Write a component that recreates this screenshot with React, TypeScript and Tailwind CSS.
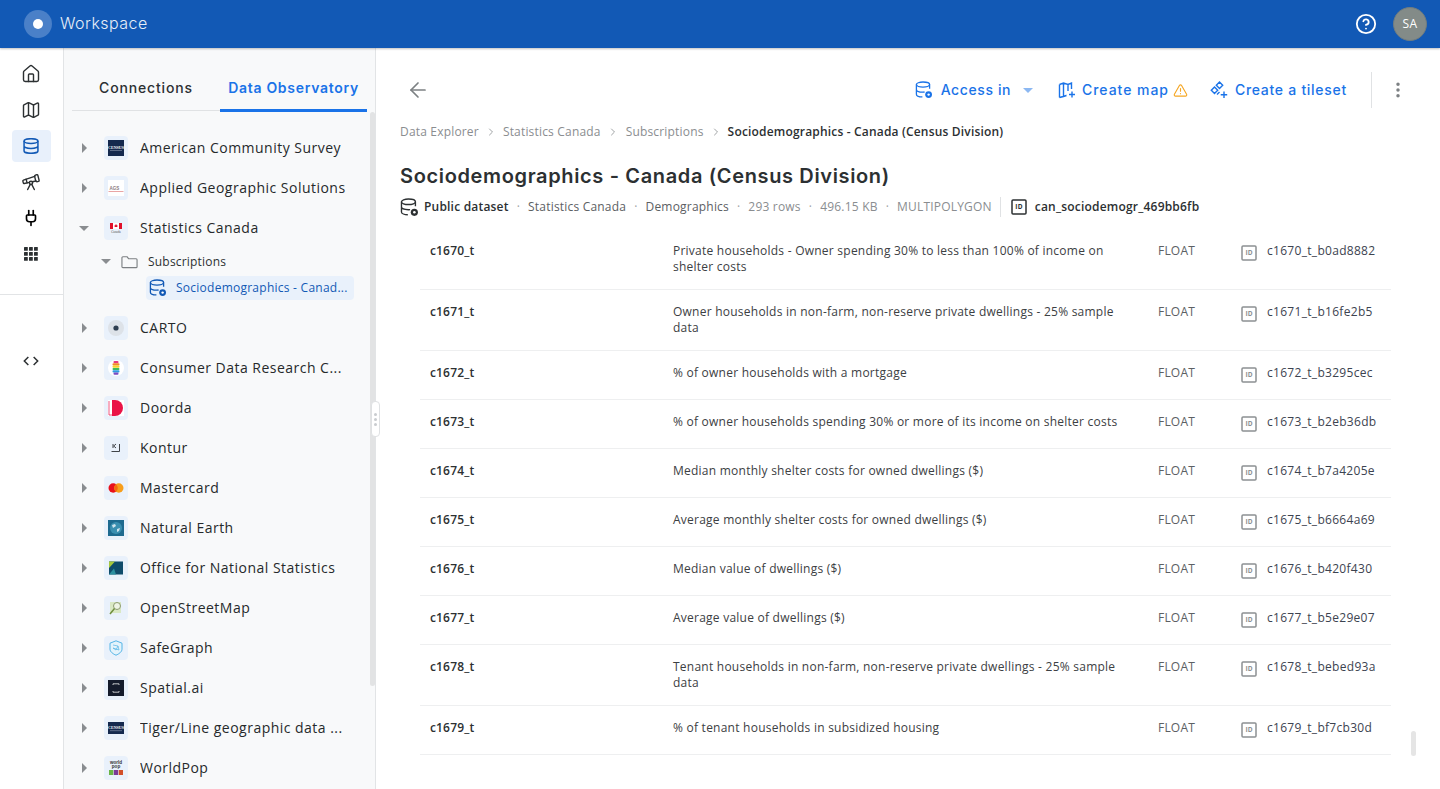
import React from "react";
import { House, Map as MapIcon, Telescope, Plug, CircleHelp, ArrowLeft, EllipsisVertical, TriangleAlert, ChevronRight } from "lucide-react";

const OPEN = "font-['Open_Sans',sans-serif]";
const HEAD = "font-['Inter',sans-serif]";

function DbBadge({ className = "" }: { className?: string }) {
  return (
    <svg viewBox="0 0 18 18" fill="none" stroke="currentColor" strokeWidth="1.3" className={className}>
      <ellipse cx="8" cy="3.6" rx="6.6" ry="2.6" />
      <path d="M1.4 3.6v9.6c0 1.5 2.8 2.7 6 2.7M14.6 3.6v4.2M1.4 8.4c0 1.5 2.9 2.7 6.6 2.7 .6 0 1.100 0 1.600-.1" />
      <circle cx="13.6" cy="13.6" r="3.4" fill="currentColor" stroke="none" />
      <circle cx="13.6" cy="13.6" r="1.2" fill="#fff" stroke="none" />
    </svg>
  );
}

function IdIcon({ dark = false }: { dark?: boolean }) {
  return (
    <svg viewBox="0 0 16 16" className="w-4 h-4 shrink-0" fill="none">
      <rect x="1" y="1" width="14" height="14" rx="1" stroke={dark ? "#2c3032" : "#8c9092"} strokeWidth="1.500" />
      <text x="8" y="10.300" textAnchor="middle" fontSize="6.500" fontWeight="700" fontFamily="Open Sans" fill={dark ? "#2c3032" : "#8c9092"}>ID</text>
    </svg>
  );
}

function Caret({ open = false }: { open?: boolean }) {
  return open ? (
    <span className="block w-0 h-0 border-x-[5px] border-x-transparent border-t-[5px] border-t-[#8a8d90]" />
  ) : (
    <span className="block w-0 h-0 border-y-[5px] border-y-transparent border-l-[5px] border-l-[#8a8d90]" />
  );
}

const logoBox = "w-4 h-4";
const logos: Record<string, React.ReactNode> = {
  census: (
    <svg viewBox="0 0 16 16" className={logoBox}>
      <rect width="16" height="16" fill="#14294e" />
      <text x="8" y="8.500" textAnchor="middle" fontSize="4" fontWeight="700" fill="#fff" fontFamily="Liberation Serif">CENSUS</text>
      <rect x="2" y="10" width="12" height="0.600" fill="#8a98b0" />
    </svg>
  ),
  census2: (
    <svg viewBox="0 0 16 16" className={logoBox}>
      <rect y="2" width="16" height="12" fill="#14294e" />
      <text x="8" y="9" textAnchor="middle" fontSize="4" fontWeight="700" fill="#fff" fontFamily="Liberation Serif">CENSUS</text>
      <rect x="2" y="10.500" width="12" height="0.600" fill="#8a98b0" />
    </svg>
  ),
  ags: (
    <svg viewBox="0 0 16 16" className={logoBox}>
      <rect width="16" height="16" fill="#fff" />
      <text x="6.500" y="10" textAnchor="middle" fontSize="4.500" fontWeight="700" fill="#8a7a80" fontFamily="Liberation Sans">AGS</text>
      <rect x="0.500" y="11" width="15" height="0.500" fill="#d24a4a" />
    </svg>
  ),
  canada: (
    <svg viewBox="0 0 16 16" className={logoBox}>
      <rect x="2" y="3" width="12" height="6" fill="#fff" />
      <rect x="2" y="3" width="3" height="6" fill="#e0102a" />
      <rect x="11" y="3" width="3" height="6" fill="#e0102a" />
      <path d="M8 4l1 1.500.6-.3-.3 1.800H6.700l-.3-1.800.6.300z" fill="#e0102a" />
      <text x="8" y="13" textAnchor="middle" fontSize="3.200" fill="#555" fontFamily="Liberation Serif">Canada</text>
    </svg>
  ),
  carto: (
    <svg viewBox="0 0 16 16" className={logoBox}>
      <circle cx="8" cy="8" r="8" fill="#dde2e8" />
      <circle cx="8" cy="8" r="2.600" fill="#2f3f50" />
    </svg>
  ),
  cdrc: (
    <svg viewBox="0 0 16 16" className={logoBox}>
      <circle cx="8" cy="8" r="8" fill="#fff" />
      {["#e6397f", "#f28c28", "#f6d32d", "#3dbb5e", "#2f9de0", "#7a4bc2"].map((c, i) => (
        <rect key={c} x={i === 0 || i === 5 ? 5.500 : 4.500} y={1 + i * 2.300} width={i === 0 || i === 5 ? 5 : 7} height="2.200" rx="1" fill={c} />
      ))}
    </svg>
  ),
  doorda: (
    <svg viewBox="0 0 16 16" className={logoBox}>
      <rect width="16" height="16" fill="#fff" />
      <path d="M4 0h3a8 8 0 0 1 0 16H4z" fill="#ea1347" />
      <path d="M1 1v14h4" fill="none" stroke="#ea1347" strokeWidth="0.700" />
    </svg>
  ),
  kontur: (
    <svg viewBox="0 0 16 16" className={logoBox}>
      <path d="M5 4v4M8 4L5.700 6 8 8M3.500 11.500h8V4" fill="none" stroke="#2b2f33" strokeWidth="0.900" />
    </svg>
  ),
  mastercard: (
    <svg viewBox="0 0 16 16" className={logoBox}>
      <circle cx="5.200" cy="8" r="4.700" fill="#e8101c" />
      <circle cx="10.800" cy="8" r="4.700" fill="#f79e1b" />
      <path d="M8 4.300a4.700 4.700 0 0 1 0 7.400 4.700 4.700 0 0 1 0-7.400z" fill="#f26a10" />
    </svg>
  ),
  earth: (
    <svg viewBox="0 0 16 16" className={logoBox}>
      <rect width="16" height="16" fill="#1d6a8f" />
      <circle cx="8" cy="8" r="6" fill="#3a8fb0" />
      <path d="M4 5l3-1 1 2-3 2zM9 9l3-1-1 3-2 1z" fill="#cfe3ec" />
    </svg>
  ),
  ons: (
    <svg viewBox="0 0 16 16" className={logoBox}>
      <rect x="1" y="1.500" width="14" height="13" fill="#0f4c6b" />
      <path d="M1 14.500V8l6-6.500H1z" fill="#a7c83c" />
      <path d="M1 14.500l5-6 2 6z" fill="#2a8f9f" />
    </svg>
  ),
  osm: (
    <svg viewBox="0 0 16 16" className={logoBox}>
      <rect x="2" y="2" width="11" height="11" fill="#d9e8c4" />
      <circle cx="9" cy="6" r="3.500" fill="#eef4e4" stroke="#8c9a70" strokeWidth="1" />
      <path d="M6.500 8.500L2 14" stroke="#6f8f3f" strokeWidth="1.500" />
    </svg>
  ),
  safegraph: (
    <svg viewBox="0 0 16 16" className={logoBox}>
      <path d="M8 .8l6 2.400v6c0 2.500-3 4.800-6 6-3-1.200-6-3.500-6-6v-6z" fill="#e4f3fb" stroke="#53b4e6" strokeWidth="1" />
      <path d="M5 5l5 1-2 4-3-2 6 2M10 6l1 4" fill="none" stroke="#53b4e6" strokeWidth="0.700" />
    </svg>
  ),
  spatial: (
    <svg viewBox="0 0 16 16" className={logoBox}>
      <rect width="16" height="16" fill="#141b2b" />
      <path d="M5 5V3.800h6V5M5 11v1.200h6V11" fill="none" stroke="#e6e8ea" strokeWidth="0.800" />
    </svg>
  ),
  worldpop: (
    <svg viewBox="0 0 16 16" className={logoBox}>
      <text x="8" y="4" textAnchor="middle" fontSize="4.600" fontWeight="700" fill="#333" fontFamily="Liberation Sans">world</text>
      <text x="8" y="8.300" textAnchor="middle" fontSize="4.600" fontWeight="700" fill="#333" fontFamily="Liberation Sans">pop</text>
      <rect x="1" y="10" width="4.300" height="5" fill="#6ab445" />
      <rect x="5.800" y="10" width="4.300" height="5" fill="#7a3a96" />
      <rect x="10.700" y="10" width="4.300" height="5" fill="#d2502a" />
    </svg>
  ),
};

function TreeRow({ name, logo, open = false }: { name: string; logo: string; open?: boolean }) {
  return (
    <div className="flex items-center h-10">
      <div className="w-6 flex justify-center"><Caret open={open} /></div>
      <div className="w-6 h-6 ml-2 rounded bg-[#e9f1fb] flex items-center justify-center shrink-0">{logos[logo]}</div>
      <div className="ml-3 w-[212px] truncate text-sm font-medium tracking-[0.48px] text-[#26292b]">{name}</div>
    </div>
  );
}

const rows: [string, string, string, number][] = [
  ["c1670_t", "Private households - Owner spending 30% to less than 100% of income on shelter costs", "c1670_t_b0ad8882", 2],
  ["c1671_t", "Owner households in non-farm, non-reserve private dwellings - 25% sample data", "c1671_t_b16fe2b5", 2],
  ["c1672_t", "% of owner households with a mortgage", "c1672_t_b3295cec", 1],
  ["c1673_t", "% of owner households spending 30% or more of its income on shelter costs", "c1673_t_b2eb36db", 1],
  ["c1674_t", "Median monthly shelter costs for owned dwellings ($)", "c1674_t_b7a4205e", 1],
  ["c1675_t", "Average monthly shelter costs for owned dwellings ($)", "c1675_t_b6664a69", 1],
  ["c1676_t", "Median value of dwellings ($)", "c1676_t_b420f430", 1],
  ["c1677_t", "Average value of dwellings ($)", "c1677_t_b5e29e07", 1],
  ["c1678_t", "Tenant households in non-farm, non-reserve private dwellings - 25% sample data", "c1678_t_bebed93a", 2],
  ["c1679_t", "% of tenant households in subsidized housing", "c1679_t_bf7cb30d", 1],
];

const Dot = () => <span className="text-[#a0a3a5] mx-2">·</span>;

export default function App() {
  return (
    <div className={`${OPEN} w-[1440px] h-[789px] overflow-hidden flex flex-col bg-white`}>
      <header className="h-12 shrink-0 bg-[#1259b5] flex items-center pl-6 pr-[13px] shadow-[0_1px_2px_rgba(0,0,0,0.25)] relative z-10">
        <div className="w-7 h-7 rounded-full bg-[#4a80c8] flex items-center justify-center">
          <div className="w-2.5 h-2.5 rounded-full bg-white" />
        </div>
        <div className={`${HEAD} ml-2 -mt-[2px] text-base font-light tracking-[0.45px] text-[#e6eef8]`}>Workspace</div>
        <div className="flex-1" />
        <CircleHelp className="w-[22px] h-[22px] text-white" strokeWidth={2} />
        <div className="ml-4 w-[34px] h-[34px] rounded-full bg-[#838b88] border border-[#6f7c80] flex items-center justify-center text-xs text-white tracking-[0.3px]">SA</div>
      </header>

      <div className="flex flex-1 min-h-0">
        <aside className="w-16 shrink-0 bg-white border-r border-[#e2e4e6] flex flex-col">
          <div className="flex flex-col items-center pt-2 pb-[22px] border-b border-[#e2e4e6]">
            <div className="h-9 flex items-center mr-px"><House className="w-5 h-5 text-[#2c3032]" strokeWidth={1.7} /></div>
            <div className="h-9 flex items-center mr-px"><MapIcon className="w-5 h-5 text-[#2c3032]" strokeWidth={1.7} /></div>
            <div className="w-[39px] h-8 my-[2px] rounded bg-[#e8f0fb] flex items-center justify-center">
              <svg viewBox="0 0 18 18" fill="none" stroke="#1259b5" strokeWidth="1.700" className="w-4 h-4 mr-px">
                <ellipse cx="9" cy="3.500" rx="7.800" ry="2.700" />
                <path d="M1.200 3.500v11c0 1.400 3.500 2.700 7.800 2.700s7.800-1.300 7.800-2.700v-11M1.200 9c0 1.400 3.500 2.700 7.800 2.700s7.800-1.300 7.800-2.700" />
              </svg>
            </div>
            <div className="h-9 flex items-center mr-px"><Telescope className="w-5 h-5 text-[#2c3032]" strokeWidth={1.7} /></div>
            <div className="h-9 flex items-center mr-px"><Plug className="w-[18px] h-[18px] text-black" strokeWidth={2.2} /></div>
            <div className="h-9 flex items-center mr-px">
              <svg viewBox="0 0 14 14" className="w-[14px] h-[14px]" fill="#2c3032">
                {[0, 5, 10].map((y) => [0, 5, 10].map((x) => <rect key={`${x}${y}`} x={x} y={y} width="3.800" height="3.800" rx="0.500" />))}
              </svg>
            </div>
          </div>
          <div className="flex justify-center pt-[60px] pr-px">
            <svg viewBox="0 0 18 12" className="w-4 h-3" fill="none" stroke="#2c3032" strokeWidth="1.700">
              <path d="M6 1.500L1.500 6 6 10.500M12 1.500L16.500 6 12 10.500" />
            </svg>
          </div>
        </aside>

        <section className="w-[312px] shrink-0 bg-[#f8f9fa] border-r border-[#e2e4e6] relative flex flex-col pl-2">
          <div className={`${HEAD} w-[295px] h-[63px] shrink-0 flex border-b border-[#e0e2e4] text-sm`}>
            <div className="w-[148px] h-[63px] flex justify-center items-center pt-[17px] font-medium tracking-[0.85px] text-[#2c3032]">Connections</div>
            <div className="w-[147px] h-[63px] flex justify-center items-center pt-[17px] font-semibold tracking-[0.7px] text-[#1a73e8] relative">
              Data Observatory
              <span className="absolute left-0 right-0 bottom-[-1px] h-[3px] bg-[#1a73e8]" />
            </div>
          </div>
          <div className="pt-[17px]">
            <TreeRow name="American Community Survey" logo="census" />
            <TreeRow name="Applied Geographic Solutions" logo="ags" />
            <TreeRow name="Statistics Canada" logo="canada" open />
            <div className="flex items-center h-[23px] mt-[2px] pl-[29px] text-xs tracking-[0.2px] text-[#2c3032]">
              <Caret open />
              <svg viewBox="0 0 18 14" className="w-[17px] h-[14px] ml-[10px]" fill="none" stroke="#7c8083" strokeWidth="1.200">
                <path d="M1 2.500a1 1 0 0 1 1-1h4.500l1.500 2h8a1 1 0 0 1 1 1v7.500a1 1 0 0 1-1 1H2a1 1 0 0 1-1-1z" />
              </svg>
              <span className="ml-[10px]">Subscriptions</span>
            </div>
            <div className="flex items-center w-[208px] h-6 ml-[74px] mt-[3px] mb-2 pl-[3px] rounded bg-[#e9f1fb] text-[#1259b5] text-xs tracking-[0.25px]">
              <DbBadge className="w-[18px] h-[18px] shrink-0" />
              <span className="ml-[9px] truncate w-[174px]">Sociodemographics - Canad...</span>
            </div>
            <TreeRow name="CARTO" logo="carto" />
            <TreeRow name="Consumer Data Research C..." logo="cdrc" />
            <TreeRow name="Doorda" logo="doorda" />
            <TreeRow name="Kontur" logo="kontur" />
            <TreeRow name="Mastercard" logo="mastercard" />
            <TreeRow name="Natural Earth" logo="earth" />
            <TreeRow name="Office for National Statistics" logo="ons" />
            <TreeRow name="OpenStreetMap" logo="osm" />
            <TreeRow name="SafeGraph" logo="safegraph" />
            <TreeRow name="Spatial.ai" logo="spatial" />
            <TreeRow name="Tiger/Line geographic data ..." logo="census2" />
            <TreeRow name="WorldPop" logo="worldpop" />
          </div>
          <div className="absolute left-[306px] top-[64px] w-[5px] h-[574px] rounded bg-[#e2e3e4]" />
          <div className="absolute left-[307px] top-[353px] w-[9px] h-[36px] rounded-[4px] bg-white border border-[#dfe1e3] flex flex-col items-center justify-center gap-[2px] z-10">
            <i className="block w-[3px] h-[3px] rounded-full bg-[#c9cccf]" />
            <i className="block w-[3px] h-[3px] rounded-full bg-[#c9cccf]" />
            <i className="block w-[3px] h-[3px] rounded-full bg-[#c9cccf]" />
          </div>
        </section>

        <main className="flex-1 min-w-0 relative pl-6 pr-[49px]">
          <div className="flex items-center h-9 mt-6 mr-[-17px]">
            <ArrowLeft className="w-6 h-6 ml-[6px] text-[#7c8083]" strokeWidth={1.7} />
            <div className="flex-1" />
            <div className={`${HEAD} flex items-center text-sm font-medium text-[#1a73e8]`}>
              <DbBadge className="w-[18px] h-[18px]" />
              <span className="ml-2 tracking-[0.6px]">Access in</span>
              <span className="ml-[12px] w-0 h-0 border-x-[5px] border-x-transparent border-t-[5px] border-t-[#8cb8f2]" />
              <svg viewBox="0 0 18 18" className="w-[18px] h-[18px] ml-[25px]" fill="none" stroke="currentColor" strokeWidth="1.400">
                <path d="M1.500 3.500L5.500 2 10 3.500 13.500 2v6M5.500 2v13M10 3.500V10M8.500 14.500L5.500 15.500 1.500 16.500z" />
                <path d="M1.500 3.500v13M14 10.500v6M11 13.500h6" />
              </svg>
              <span className="ml-[6px] tracking-[0.95px]">Create map</span>
              <TriangleAlert className="w-[15px] h-[15px] ml-1 text-[#f5a623]" strokeWidth={1.8} />
              <svg viewBox="0 0 18 18" className="w-[18px] h-[18px] ml-[22px]" fill="none" stroke="currentColor" strokeWidth="1.400">
                <path d="M9.500 1l3.200 3.200-3.200 3.200-3.200-3.200zM4.500 6l3.200 3.200-3.200 3.200-3.200-3.200zM9.500 11l-2.500 2.500" />
                <path d="M14 10.500v6.500M10.700 13.700h6.500" />
              </svg>
              <span className="ml-[7px] tracking-[0.72px]">Create a tileset</span>
            </div>
            <div className="w-px h-9 bg-[#e0e2e4] ml-6" />
            <EllipsisVertical className="w-5 h-5 ml-4 text-[#7c8083]" strokeWidth={2.2} />
          </div>

          <nav className="flex items-center h-4 mt-4 text-xs tracking-[0.18px] text-[#8a8d90]">
            <span>Data Explorer</span>
            <ChevronRight className="w-3 h-3 mx-[6px] text-[#a0a3a5]" />
            <span>Statistics Canada</span>
            <ChevronRight className="w-3 h-3 ml-[6px] mr-[7px] text-[#a0a3a5]" />
            <span>Subscriptions</span>
            <ChevronRight className="w-3 h-3 mx-[6px] text-[#a0a3a5]" />
            <span className="font-semibold text-[#2c3032]">Sociodemographics - Canada (Census Division)</span>
          </nav>

          <h1 className={`${HEAD} mt-[22px] text-xl leading-7 font-semibold tracking-[0.64px] text-[#2c3032]`}>Sociodemographics - Canada (Census Division)</h1>

          <div className="flex items-center h-6 mt-[5px] text-xs tracking-[0.2px] text-[#5c6063] whitespace-nowrap">
            <DbBadge className="w-[19px] h-[19px] text-[#2c3032]" />
            <span className="ml-[5px] font-semibold text-[#2c3032]">Public dataset</span>
            <Dot />
            <span>Statistics Canada</span>
            <Dot />
            <span>Demographics</span>
            <Dot />
            <span className="text-[#8a8d90]">293 rows</span>
            <Dot />
            <span className="text-[#8a8d90]">496.15 KB</span>
            <Dot />
            <span className="text-[#8a8d90]">MULTIPOLYGON</span>
            <span className="w-px h-5 bg-[#e0e2e4] ml-2 mr-[10px]" />
            <IdIcon dark />
            <span className="ml-2 font-semibold text-[#2c3032]">can_sociodemogr_469bb6fb</span>
          </div>

          <div className="ml-5 mt-[10px] w-[971px]">
            {rows.map(([name, desc, id, lines]) => (
              <div key={name} className={`flex items-start pt-[14px] border-b border-[#eeeff0] text-xs leading-4 ${lines === 2 ? "h-[61px]" : "h-[49px]"}`}>
                <div className="w-[253px] pl-[10px] font-semibold text-[#2c3032] tracking-[0.15px] shrink-0">{name}</div>
                <div className="w-[485px] pr-[30px] text-[#3c4043] shrink-0 tracking-[0.24px]">{desc}</div>
                <div className="w-[83px] text-[#5c6063] tracking-[0.2px] shrink-0">FLOAT</div>
                <div className="flex items-start">
                  <div className="mt-[2px]"><IdIcon /></div>
                  <span className="ml-[10px] text-[#3c4350] tracking-[0.3px]">{id}</span>
                </div>
              </div>
            ))}
          </div>

          <div className="absolute left-[1035px] top-[683px] w-[5px] h-[25px] rounded bg-[#e5e5e5]" />
        </main>
      </div>
    </div>
  );
}
